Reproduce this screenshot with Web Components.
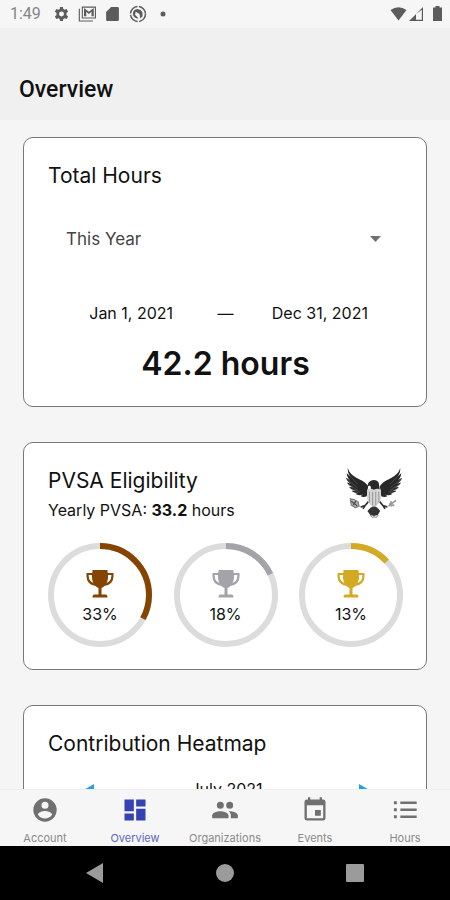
<!DOCTYPE html>
<html lang="en">
<head>
<meta charset="utf-8">
<meta name="viewport" content="width=device-width,initial-scale=1">
<title>Overview</title>
<style>
body{margin:0;background:#f5f5f5;color:#111;font-family:Inter,"Liberation Sans",sans-serif}
</style>
</head>
<body>
<app-shell>
  <status-bar slot="top" time="1:49"></status-bar>
  <page-header slot="top">Overview</page-header>

  <info-card heading="Total Hours">
    <hours-summary from="Jan 1, 2021" to="Dec 31, 2021" total="42.2 hours"></hours-summary>
  </info-card>

  <info-card heading="PVSA Eligibility">
    <eagle-emblem slot="emblem"></eagle-emblem>
    <span slot="sub">Yearly PVSA: <b>33.2</b> hours</span>
    <ring-row>
      <award-ring value="33" color="#854400"></award-ring>
      <award-ring value="18" color="#a3a3a9"></award-ring>
      <award-ring value="13" color="#d4aa25"></award-ring>
    </ring-row>
  </info-card>

  <info-card heading="Contribution Heatmap">
    <month-picker>July 2021</month-picker>
  </info-card>

  <tab-bar slot="bottom">
    <tab-item icon="account">Account</tab-item>
    <tab-item icon="overview" active>Overview</tab-item>
    <tab-item icon="people">Organizations</tab-item>
    <tab-item icon="event">Events</tab-item>
    <tab-item icon="list">Hours</tab-item>
  </tab-bar>
  <system-nav slot="bottom"></system-nav>
</app-shell>

<script>
const ICONS={
  account:'<path fill-rule="evenodd" d="M12 2a10 10 0 1 0 0 20 10 10 0 0 0 0-20zm0 3a3 3 0 1 1 0 6 3 3 0 0 1 0-6zm0 14.2a7.2 7.2 0 0 1-6-3.22c.03-1.99 4-3.08 6-3.08s5.97 1.09 6 3.08a7.2 7.2 0 0 1-6 3.22z"/>',
  overview:'<path d="M3 13h8V3H3v10zm0 8h8v-6H3v6zm10 0h8V11h-8v10zm0-18v6h8V3h-8z"/>',
  people:'<path d="M16 11a3 3 0 1 0 0-6 3 3 0 0 0 0 6zm-8 0a3 3 0 1 0 0-6 3 3 0 0 0 0 6zm0 2c-2.33 0-7 1.17-7 3.5V19h14v-2.5C15 14.17 10.33 13 8 13zm8 0c-.29 0-.62.02-.97.05 1.16.84 1.97 1.97 1.97 3.45V19h6v-2.5c0-2.33-4.67-3.5-7-3.5z"/>',
  event:'<path d="M17 12h-5v5h5v-5zM16 1v2H8V1H6v2H5a2 2 0 0 0-2 2v14a2 2 0 0 0 2 2h14a2 2 0 0 0 2-2V5a2 2 0 0 0-2-2h-1V1h-2zm3 18H5V8h14v11z"/>',
  list:'<path d="M2.500 4.500h2.500V7H2.500zM2.500 10.500h2.500V13H2.500zM2.500 16.500h2.500V19H2.500zM8 4.800h14v2H8zM8 10.800h14v2H8zM8 16.800h14v2H8z"/>'
};

class BaseElement extends HTMLElement{

connectedCallback(){
  if(this.shadowRoot) return;
  this.attachShadow({mode:'open'}).innerHTML=this.render();
}

attr(name){
  return this.getAttribute(name)||'';
}

}

customElements.define('app-shell',class extends BaseElement{
render(){
  return `
<style>
:host{display:flex;flex-direction:column;height:100vh;overflow:hidden}
main{flex:1;min-height:0;overflow-y:auto;scrollbar-width:none;box-sizing:border-box;padding:17px 23px;display:flex;flex-direction:column;gap:35px}
</style>
<slot name="top"></slot>
<main><slot></slot></main>
<slot name="bottom"></slot>`;
}
});

customElements.define('status-bar',class extends BaseElement{
render(){
  return `
<style>
:host{display:flex;align-items:center;height:28px;padding:0 8px 0 10px;color:#5c5c5c;background:#f6f6f6;flex:none}
time{font:16px/20px Roboto,sans-serif;color:#858585;margin-right:12px}
div{display:flex;align-items:center;gap:8px;flex:1}
div+div{flex:none;gap:2px}
svg{display:block;fill:currentColor}
</style>
<time>${this.attr('time')}</time>
<div>
  <svg width="17" height="18" viewBox="0 0 24 24"><path fill-rule="evenodd" d="M10 2h4l.5 3 2 1.100 2.800-1.100 2 3.500-2.300 2a8 8 0 0 1 0 3l2.300 2-2 3.500-2.800-1.100-2 1.100-.5 3h-4l-.5-3-2-1.100-2.800 1.100-2-3.500 2.300-2a8 8 0 0 1 0-3l-2.300-2 2-3.500 2.800 1.100 2-1.100zm2 6.500a3.500 3.500 0 1 0 0 7 3.500 3.500 0 0 0 0-7z"/></svg>
  <svg width="18" height="18" viewBox="0 0 24 24"><path fill-rule="evenodd" d="M5 2h19v16H5zm1.500 1.500v13h16v-13z"/><path d="M8 15V4l6.500 5L21 4v11h-3V9l-3.500 3L11 9v6z"/><path d="M1 5h1.500v15.500H20V22H1z"/></svg>
  <svg width="17" height="18" viewBox="0 0 24 24"><path d="M10 2h9a2 2 0 0 1 2 2v16a2 2 0 0 1-2 2H5a2 2 0 0 1-2-2V9z"/></svg>
  <svg width="18" height="18" viewBox="0 0 24 24"><circle cx="12" cy="12" r="10" fill="none" stroke="currentColor" stroke-width="2" stroke-dasharray="14 2"/><path d="M6 8a7 7 0 0 1 12 2v5l-3 3-1-6-5-3-1 4 5 5a7 7 0 0 1-8-6z"/></svg>
  <svg width="16" height="18" viewBox="0 0 16 18"><circle cx="8" cy="9" r="2.500"/></svg>
</div>
<div>
  <svg width="17" height="18" viewBox="0 0 17 18"><path d="M.5 5q8-5.500 16 0l-8 10.500z"/></svg>
  <svg width="22" height="18" viewBox="0 0 22 18"><path fill-rule="evenodd" d="M0 16 14 2v14zm7-7v5.800h5.800V4.700z"/></svg>
  <svg width="9" height="18" viewBox="0 0 9 18"><path d="M2.500 1h4v1.500H9V16H0V2.500h2.500z"/></svg>
</div>`;
}
});

customElements.define('page-header',class extends BaseElement{
render(){
  return `
<style>
:host{display:block;flex:none;background:#f0f0f0;padding:47px 19px 15px}
h1{margin:0;font:500 23px/30px Roboto,sans-serif;color:#111}
</style>
<h1><slot></slot></h1>`;
}
});

customElements.define('info-card',class extends BaseElement{
render(){
  return `
<style>
:host{display:block;flex:none;background:#fff;border:1px solid #777;border-radius:10px;padding:25px 23px 22px 24px}
header{display:flex;justify-content:space-between}
h2{margin:0;font-weight:400;font-size:21px;line-height:26px}
slot[name=sub]{display:block;font-size:16px;line-height:20px}
::slotted([slot=sub]){display:block;margin-top:6px}
</style>
<header>
  <div><h2>${this.attr('heading')}</h2><slot name="sub"></slot></div>
  <slot name="emblem"></slot>
</header>
<slot></slot>`;
}
});

customElements.define('hours-summary',class extends BaseElement{
render(){
  return `
<style>
:host{display:block}
.range{display:grid;margin:22px 0 36px;align-items:center}
.range>*{grid-area:1/1}
select{appearance:none;width:100%;height:56px;padding:0 18px;border:0;background:none;font:17px/24px Inter,sans-serif;color:#444}
svg{justify-self:end;margin-right:22px;fill:#707070;pointer-events:none}
.dates{display:grid;grid-template-columns:repeat(3,1fr);justify-items:center;padding:0 36px;font-size:16px;line-height:20px;white-space:nowrap}
.dates>*{min-width:0}
.total{margin:21px 0 0;text-align:center;font-weight:600;font-size:32px;line-height:40px}
</style>
<div class="range">
  <select aria-label="Time range"><option>This Year</option></select>
  <svg width="11" height="6" viewBox="0 0 11 6"><path d="M0 0h11L5.500 6z"/></svg>
</div>
<div class="dates"><span>${this.attr('from')}</span><span>—</span><span>${this.attr('to')}</span></div>
<p class="total">${this.attr('total')}</p>`;
}
});

customElements.define('ring-row',class extends BaseElement{
render(){
  return `
<style>:host{display:flex;justify-content:space-between;gap:16px;margin-top:23px}</style>
<slot></slot>`;
}
});

customElements.define('award-ring',class extends BaseElement{
render(){
  const value=this.attr('value');
  const color=this.attr('color');
  return `
<style>
:host{display:grid;flex:0 1 104px;justify-items:center;font-size:16px;line-height:20px}
.ring,.label{grid-area:1/1}
.ring{width:100%;display:block;fill:none;stroke-width:6}
.label{display:flex;flex-direction:column;align-items:center;align-self:center;gap:6px;padding-top:4px}
</style>
<svg class="ring" viewBox="0 0 104 104">
  <circle cx="52" cy="52" r="49" stroke="#dcdcdc"/>
  <circle cx="52" cy="52" r="49" stroke="${color}" pathLength="100" stroke-dasharray="${value} 100" transform="rotate(-90 52 52)"/>
</svg>
<div class="label">
  <svg width="28" height="28" viewBox="0 0 28 28" fill="${color}">
    <path d="M6.500 0h15v2.500h.500V7c0 5-2.500 9-6.500 11v6.500h4q2 0 2 3H6.500q0-3 2-3h4V18C8.500 16 6 12 6 7V2.500h.500z"/>
    <path fill="none" stroke="${color}" stroke-width="2.200" d="M7 4H1.600c-.6 6 2.400 10 8.400 11M21 4h5.400c.6 6-2.400 10-8.400 11"/>
  </svg>
  <span>${value}%</span>
</div>`;
}
});

customElements.define('eagle-emblem',class extends BaseElement{
render(){
  // one wing and leg, mirrored round the shield
  const half=`
<path fill="#282828" d="M28 22c3 12 12 21 25 28 15 8 28 13 34 25l-4 29c-8 3-14 2-18-1l7-4c-9 3-17 2-22-2l9-3c-9 1-16-1-20-6l11-1c-9-1-15-5-18-10l11 1c-9-3-15-8-17-14l11 4c-8-5-13-11-14-18l11 7c-6-7-9-13-9-20l10 10c-5-8-8-16-7-25z"/>
<path stroke="#888" stroke-width="1" fill="none" d="m29 39 28 30M26 55l30 24M31 70l27 17M38 82l24 10"/>
<path stroke="#333" stroke-width="5" fill="none" d="m91 116-13 15-13 4m13-4-6 9"/>`;
  return `
<style>
:host{display:block;flex:none}
svg{display:block}
</style>
<svg width="58" height="50" viewBox="20 22 168 145" role="img" aria-label="Eagle">
  ${half}<g transform="matrix(-1 0 0 1 208 0)">${half}</g>
  <path fill="#282828" d="M88 65c7-11 25-12 30 1l3 20H94c2-6 1-10-2-13l-8 3z"/>
  <path fill="#d5d5d5" d="M84 85q10-5 20 0 10-5 20 0v22c0 13-8 23-20 29-12-6-20-16-20-29z"/>
  <path stroke="#999" stroke-width="3" d="M91 91v31M100 91v40M109 91v40M118 91v31"/>
  <path fill="#333" d="M94 137q10-6 20 0l8 10-7 11-11 3-11-3-8-11z"/>
  <path stroke="#999" stroke-width="3" fill="none" d="m92 158 8 8 5-4 4 5 8-9"/>
  <path fill="#aaa" stroke="#777" stroke-width="3" d="m35 111 11 2 12 7 3 13-11 4-12-7z"/>
  <path fill="none" stroke="#444" stroke-width="3" d="m38 118 17 14M44 129l8-11"/>
  <path fill="none" stroke="#999" stroke-width="5" d="m146 132 22-16m-20 10 15 5m-10-13 1 16"/>
</svg>`;
}
});

customElements.define('month-picker',class extends BaseElement{
render(){
  return `
<style>
:host{display:flex;align-items:center;justify-content:space-between;margin-top:20px;padding:0 22px 0 24px;font-size:16px;line-height:20px}
button{display:block;padding:7px 8px 0;border:0;background:none}
svg{display:block;fill:#1fa3e6}
</style>
<button aria-label="Previous month"><svg width="14" height="16" viewBox="0 0 14 16"><path d="M14 0v16L0 8z"/></svg></button>
<span><slot></slot></span>
<button aria-label="Next month"><svg width="14" height="16" viewBox="0 0 14 16"><path d="M0 0v16l14-8z"/></svg></button>`;
}
});

customElements.define('tab-bar',class extends BaseElement{
render(){
  return `
<style>
:host{display:block;flex:none;background:#f6f6f6;border-top:1px solid #eee}
nav{display:grid;grid-template-columns:repeat(5,1fr)}
</style>
<nav><slot></slot></nav>`;
}
});

customElements.define('tab-item',class extends BaseElement{
render(){
  return `
<style>
:host{display:block;color:#707070}
:host([active]){color:#3442b4}
a{display:flex;flex-direction:column;align-items:center;gap:7px;padding:6px 0 0;height:50px;color:inherit;text-decoration:none;font-size:11px;line-height:14px}
svg{display:block;fill:currentColor}
span{opacity:.8}
</style>
<a href="#${this.attr('icon')}"><svg width="28" height="28" viewBox="0 0 24 24">${ICONS[this.attr('icon')]}</svg><span><slot></slot></span></a>`;
}
});

customElements.define('system-nav',class extends BaseElement{
render(){
  return `
<style>
:host{display:grid;grid-template-columns:repeat(3,1fr);flex:none;height:54px;padding:0 30px;background:#000}
button{display:grid;place-items:center;border:0;padding:0;background:none}
svg{display:block;fill:#9b9b9b}
</style>
<button aria-label="Back"><svg width="20" height="20" viewBox="0 0 20 20"><path d="M18 0v20L1 10z"/></svg></button>
<button aria-label="Home"><svg width="20" height="20" viewBox="0 0 20 20"><circle cx="10" cy="10" r="9"/></svg></button>
<button aria-label="Recent apps"><svg width="20" height="20" viewBox="0 0 20 20"><rect x="1" y="1" width="18" height="18" rx="1"/></svg></button>`;
}
});
</script>
</body>
</html>
